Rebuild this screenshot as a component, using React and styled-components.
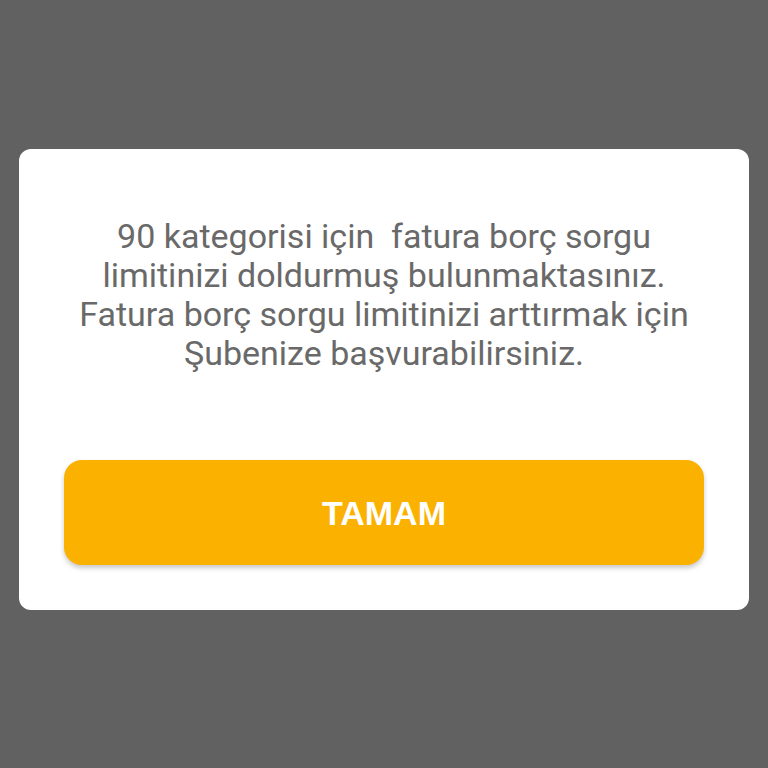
import React from 'react'
import styled, { createGlobalStyle } from 'styled-components';

const GlobalStyle = createGlobalStyle`
    html, body {
        margin: 0;
        padding: 0;
        background-color: #616161;
    }
`;

const Overlay = styled.div`
    width: 768px;
    height: 768px;
    box-sizing: border-box;
    padding-top: 149px;
    display: flex;
    justify-content: center;
    background-color: #616161;
`;

const Dialog = styled.div`
    width: 730px;
    height: 461px;
    box-sizing: border-box;
    padding: 68px 45px 45px;
    background-color: #ffffff;
    border-radius: 12px;
    display: flex;
    flex-direction: column;
    align-items: center;
`;

const Message = styled.p`
    margin: 0;
    font-family: Roboto, "Noto Sans", sans-serif;
    font-size: 34px;
    line-height: 39px;
    color: #696969;
    text-align: center;
    white-space: pre-line;
`;

const ConfirmButton = styled.button`
    margin-top: auto;
    width: 100%;
    height: 105px;
    flex-shrink: 0;
    padding-top: 3px;
    border: none;
    border-radius: 18px;
    background-color: #fbb100;
    color: #ffffff;
    font-family: "Liberation Sans", Arial, sans-serif;
    font-weight: bold;
    font-size: 34px;
    box-shadow: 0 3px 5px rgba(0, 0, 0, 0.22);
    cursor: pointer;
`;

const App = () => {
    return (
        <>
            <GlobalStyle />
            <Overlay>
                <Dialog>
                    <Message>
                        {'90 kategorisi için \u00a0fatura borç sorgu\nlimitinizi doldurmuş bulunmaktasınız.\nFatura borç sorgu limitinizi arttırmak için\nŞubenize başvurabilirsiniz.'}
                    </Message>
                    <ConfirmButton>TAMAM</ConfirmButton>
                </Dialog>
            </Overlay>
        </>
    )
}

export default App
